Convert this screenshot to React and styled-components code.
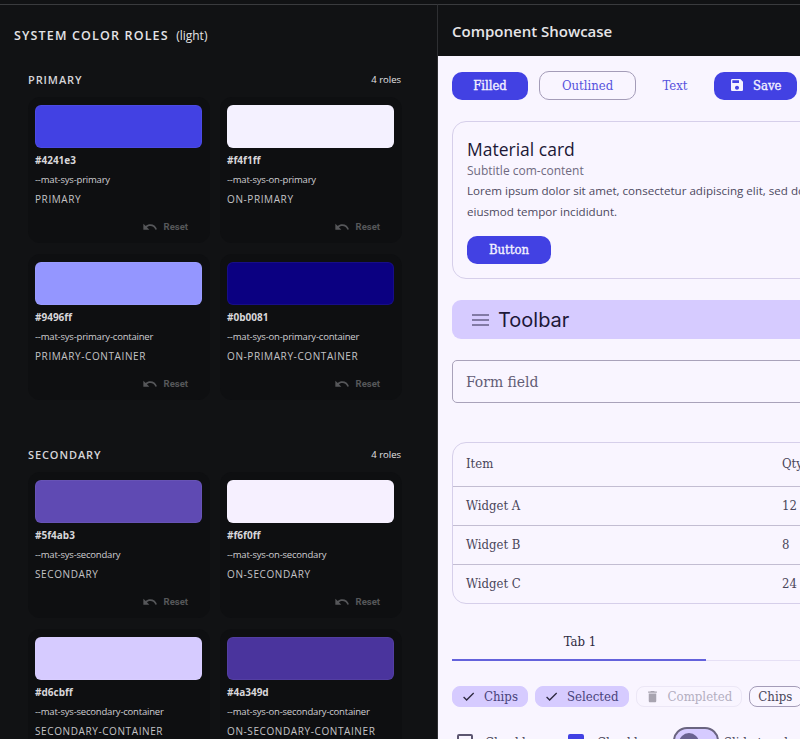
import React from 'react'
import styled, { createGlobalStyle } from 'styled-components'

const serif = `"DejaVu Serif Condensed", "DejaVu Serif", "Liberation Serif", serif`
const sans = `"Open Sans", "Noto Sans", sans-serif`

const GlobalStyle = createGlobalStyle`
	html, body {
		margin: 0;
		padding: 0;
		height: 100%;
		overflow: hidden;
		background: #111214;
	}
	* {
		box-sizing: border-box;
	}
`

const Page = styled.div`
	width: 800px;
	height: 739px;
	overflow: hidden;
	display: grid;
	grid-template-columns: 438px 362px;
	grid-template-rows: 1fr;
	background: #111214;
	padding-top: 4px;
	font-family: ${sans};
`

const Left = styled.div`
	border-top: 1px solid #3a3b3e;
	border-right: 1px solid #2e2f32;
	padding: 21px 14px 0;
	overflow: hidden;
	min-width: 0;
`

const Title = styled.h1`
	margin: 0 0 24px;
	font-size: 12.5px;
	line-height: 20px;
	font-weight: 600;
	letter-spacing: 1.15px;
	color: #e4e3e6;
	text-transform: uppercase;
	span {
		margin-left: 3px;
		letter-spacing: 0;
		font-size: 12px;
		text-transform: none;
		font-weight: 400;
	}
`

const Section = styled.section`
	padding: 0 22px 0 14px;
	margin-bottom: 45px;
`

const SectionHead = styled.div`
	display: flex;
	justify-content: space-between;
	align-items: center;
	height: 18px;
	margin-bottom: 9px;
	h2 {
		margin: 0;
		font-size: 11px;
		font-weight: 600;
		letter-spacing: 0.9px;
		color: #d6d5d8;
	}
	span {
		font-size: 9.5px;
		color: #e2e1e4;
	}
`

const CardGrid = styled.div`
	display: grid;
	grid-template-columns: 182px 182px;
	column-gap: 10px;
	row-gap: 11px;
`

const RoleCard = styled.div`
	height: 146px;
	padding: 8px 8px 0 7px;
	background: #0e0f11;
	border-radius: 12px;
	display: flex;
	flex-direction: column;
`

const Swatch = styled.div`
	height: 43px;
	flex: none;
	border-radius: 6px;
	background: ${p => p.$color};
	border: 1px solid rgba(255, 255, 255, 0.05);
`

const Hex = styled.div`
	margin-top: 5px;
	font-size: 10px;
	line-height: 14px;
	font-weight: 700;
	color: #d8d7da;
`

const VarName = styled.div`
	margin-top: 6px;
	font-size: 9.5px;
	line-height: 14px;
	font-weight: 500;
	letter-spacing: -0.2px;
	color: #cfced1;
	white-space: nowrap;
`

const RoleName = styled.div`
	margin-top: 5px;
	font-size: 10px;
	line-height: 14px;
	letter-spacing: 0.6px;
	color: #c4c3c6;
	white-space: nowrap;
`

const Reset = styled.div`
	margin-top: 13px;
	padding-right: 14px;
	display: flex;
	justify-content: flex-end;
	align-items: center;
	gap: 6px;
	font-family: Roboto, sans-serif;
	font-size: 9.5px;
	line-height: 14px;
	font-weight: 700;
	color: #56575a;
	svg {
		width: 16px;
		height: 16px;
		fill: #56575a;
	}
`

const Right = styled.div`
	display: flex;
	flex-direction: column;
	min-width: 0;
	overflow: hidden;
`

const RightHead = styled.div`
	flex: none;
	height: 52px;
	border-top: 1px solid #3a3b3e;
	padding: 0 14px;
	display: flex;
	align-items: center;
	background: #111214;
	font-size: 15px;
	font-weight: 600;
	color: #e6e5e8;
`

const Showcase = styled.div`
	flex: 1;
	padding: 15px 14px 0;
	background: #f9f5ff;
	width: 520px;
`

const ButtonRow = styled.div`
	display: flex;
	align-items: center;
	margin-bottom: 21px;
`

const FilledButton = styled.div`
	width: ${p => (p.$width ? `${p.$width}px` : 'auto')};
	height: 28px;
	padding: 0 ${p => p.$pad || 0}px 1px;
	margin-right: ${p => p.$gap || 0}px;
	display: inline-flex;
	align-items: center;
	justify-content: center;
	gap: 8px;
	border-radius: 10px;
	background: #4241e3;
	font-family: ${serif};
	font-size: 13px;
	font-weight: 400;
	-webkit-text-stroke: 0.35px #f4f1ff;
	color: #f4f1ff;
	svg {
		width: 16px;
		height: 16px;
		fill: #f4f1ff;
	}
`

const OutlinedButton = styled.div`
	width: 97px;
	height: 29px;
	margin-right: 14px;
	display: flex;
	align-items: center;
	justify-content: center;
	border: 1px solid #a49cb8;
	border-radius: 10px;
	font-family: ${serif};
	font-size: 13px;
	color: #5652dd;
`

const TextButton = styled.div`
	width: 50px;
	margin-right: 14px;
	text-align: center;
	font-family: ${serif};
	font-size: 13px;
	color: #5652dd;
`

const Card = styled.div`
	height: 158px;
	padding: 15px 14px 0;
	border: 1px solid #d6cfea;
	border-radius: 14px;
	margin-bottom: 21px;
	h3 {
		margin: 0;
		font-size: 17.5px;
		line-height: 24px;
		font-weight: 400;
		color: #1c1836;
	}
`

const Subtitle = styled.div`
	margin-top: 1px;
	font-size: 12px;
	line-height: 18px;
	color: #6f6a80;
`

const Lorem = styled.p`
	margin: 0 0 14px;
	font-size: 11.6px;
	line-height: 21px;
	color: #4d4960;
	width: 370px;
`

const Toolbar = styled.div`
	height: 39px;
	padding: 0 20px;
	display: flex;
	align-items: center;
	gap: 9px;
	border-radius: 9px;
	background: #d6cbff;
	margin-bottom: 21px;
	font-family: Inter, sans-serif;
	font-size: 20px;
	color: #1d1838;
	svg {
		width: 17px;
		height: 14px;
		stroke: #4a4468;
		stroke-width: 1.2;
	}
`

const FormField = styled.div`
	height: 43px;
	padding: 1px 13px 0;
	display: flex;
	align-items: center;
	border: 1px solid #a9a2ba;
	border-radius: 5px;
	margin-bottom: 39px;
	font-family: ${serif};
	font-size: 15.5px;
	color: #625c75;
`

const Table = styled.div`
	height: 162px;
	border: 1px solid #d6cfea;
	border-radius: 14px;
	margin-bottom: 21px;
	overflow: hidden;
`

const TableRow = styled.div`
	height: ${p => p.$height}px;
	padding-bottom: ${p => (p.$height > 39 || p.$last ? 3 : 1)}px;
	display: grid;
	grid-template-columns: 316px 1fr;
	align-items: center;
	border-bottom: ${p => (p.$last ? '0' : '1px solid #c3bdd2')};
	font-family: ${serif};
	font-size: 13px;
	color: #4a465a;
	div {
		padding-left: 13px;
	}
`

const Tabs = styled.div`
	display: flex;
	height: 36px;
	margin-bottom: 25px;
	border-bottom: 1px solid #e6e0f5;
`

const Tab = styled.div`
	flex: none;
	width: 254px;
	height: 36px;
	display: flex;
	align-items: center;
	justify-content: center;
	padding: 0 0 1px 2px;
	border-bottom: 2px solid ${p => (p.$active ? '#6462dc' : 'transparent')};
	font-family: ${serif};
	font-size: 13px;
	color: #2d2940;
`

const ChipRow = styled.div`
	display: flex;
	gap: 7px;
	margin-bottom: 26px;
`

const Chip = styled.div`
	height: 21px;
	padding: 0 ${p => (p.$plain ? 10 : 9)}px 0 8px;
	display: inline-flex;
	align-items: center;
	gap: 8px;
	border-radius: 8px;
	background: ${p => (p.$selected ? '#d6cbff' : 'transparent')};
	border: 1px solid ${p => (p.$selected ? '#d6cbff' : p.$disabled ? '#ece7f6' : '#a49cb8')};
	font-family: ${serif};
	font-size: 13.1px;
	color: ${p => (p.$selected ? '#48427a' : p.$disabled ? '#b3aebf' : '#4a465a')};
	svg {
		width: 15px;
		height: 15px;
		fill: ${p => (p.$disabled ? '#a8a4b0' : '#2d2940')};
	}
`

const ControlRow = styled.div`
	display: flex;
	align-items: flex-start;
	font-family: ${serif};
	font-size: 13px;
	line-height: 16px;
	color: #4a465a;
`

const Box = styled.div`
	width: 16px;
	height: 16px;
	margin: 1px ${p => p.$right}px 0 ${p => p.$left}px;
	flex: none;
	border-radius: 2px;
	border: 2px solid ${p => (p.$on ? '#4241e3' : '#5c5670')};
	background: ${p => (p.$on ? '#4241e3' : 'transparent')};
`

const CheckLabel = styled.div`
	width: ${p => p.$width}px;
	flex: none;
	margin-top: 2px;
`

const ToggleTrack = styled.div`
	width: 46px;
	height: 28px;
	margin: -6px 5px 0 5px;
	padding: 4px;
	flex: none;
	border: 2px solid #6a6480;
	border-radius: 14px;
	background: #d6cbff;
`

const ToggleKnob = styled.div`
	width: 20px;
	height: 20px;
	border-radius: 50%;
	background: #6a6290;
`

const mdi = {
	undo: 'M12.5 8c-2.65 0-5.05.99-6.9 2.6L2 7v9h9l-3.62-3.62c1.39-1.16 3.16-1.88 5.12-1.88 3.54 0 6.55 2.31 7.6 5.5l2.37-.78C21.08 11.03 17.15 8 12.5 8z',
	save: 'M17 3H5c-1.11 0-2 .9-2 2v14c0 1.1.89 2 2 2h14c1.1 0 2-.9 2-2V7l-4-4zm-5 16c-1.66 0-3-1.34-3-3s1.34-3 3-3 3 1.34 3 3-1.34 3-3 3zm3-10H5V5h10v4z',
	check: 'M9 16.17L4.83 12l-1.41 1.41L9 19 21 7l-1.41-1.41z',
	trash: 'M6 19c0 1.1.9 2 2 2h8c1.1 0 2-.9 2-2V7H6v12zM19 4h-3.5l-1-1h-5l-1 1H5v2h14V4z',
}

const Icon = ({ name }) => (
	<svg viewBox="0 0 24 24"><path d={mdi[name]} /></svg>
)

const primary = [
	{ hex: '#4241e3', token: 'primary' },
	{ hex: '#f4f1ff', token: 'on-primary' },
	{ hex: '#9496ff', token: 'primary-container' },
	{ hex: '#0b0081', token: 'on-primary-container' },
]

const secondary = [
	{ hex: '#5f4ab3', token: 'secondary' },
	{ hex: '#f6f0ff', token: 'on-secondary' },
	{ hex: '#d6cbff', token: 'secondary-container' },
	{ hex: '#4a349d', token: 'on-secondary-container' },
]

const rows = [
	{ item: 'Widget A', qty: 12, height: 39 },
	{ item: 'Widget B', qty: 8, height: 39 },
	{ item: 'Widget C', qty: 24, height: 39, last: true },
]

const RoleSection = ({ name, roles }) => (
	<Section>
		<SectionHead>
			<h2>{name}</h2>
			<span>4 roles</span>
		</SectionHead>
		<CardGrid>
			{roles.map(r => (
				<RoleCard key={r.token}>
					<Swatch $color={r.hex} />
					<Hex>{r.hex}</Hex>
					<VarName>--mat-sys-{r.token}</VarName>
					<RoleName>{r.token.toUpperCase()}</RoleName>
					<Reset><Icon name="undo" />Reset</Reset>
				</RoleCard>
			))}
		</CardGrid>
	</Section>
)

export default function App() {
	return (
		<Page>
			<GlobalStyle />
			<Left>
				<Title>System color roles <span>(light)</span></Title>
				<RoleSection name="PRIMARY" roles={primary} />
				<RoleSection name="SECONDARY" roles={secondary} />
			</Left>
			<Right>
				<RightHead>Component Showcase</RightHead>
				<Showcase>
					<ButtonRow>
						<FilledButton $gap={11} $width={76}>Filled</FilledButton>
						<OutlinedButton>Outlined</OutlinedButton>
						<TextButton>Text</TextButton>
						<FilledButton $pad={15}><Icon name="save" />Save</FilledButton>
					</ButtonRow>
					<Card>
						<h3>Material card</h3>
						<Subtitle>Subtitle com-content</Subtitle>
						<Lorem>Lorem ipsum dolor sit amet, consectetur adipiscing elit, sed do eiusmod tempor incididunt.</Lorem>
						<FilledButton $width={84}>Button</FilledButton>
					</Card>
					<Toolbar>
						<svg viewBox="0 0 17 14">
							<line x1="0" y1="2" x2="17" y2="2" />
							<line x1="0" y1="7" x2="17" y2="7" />
							<line x1="0" y1="12" x2="17" y2="12" />
						</svg>
						Toolbar
					</Toolbar>
					<FormField>Form field</FormField>
					<Table>
						<TableRow $height={44}><div>Item</div><div>Qty</div></TableRow>
						{rows.map(r => (
							<TableRow key={r.item} $height={r.height} $last={r.last}>
								<div>{r.item}</div>
								<div>{r.qty}</div>
							</TableRow>
						))}
					</Table>
					<Tabs>
						<Tab $active>Tab 1</Tab>
						<Tab>Tab 2</Tab>
					</Tabs>
					<ChipRow>
						<Chip $selected><Icon name="check" />Chips</Chip>
						<Chip $selected><Icon name="check" />Selected</Chip>
						<Chip $disabled><Icon name="trash" />Completed</Chip>
						<Chip $plain>Chips</Chip>
					</ChipRow>
					<ControlRow>
						<Box $left={5} $right={12} />
						<CheckLabel $width={83}>Checkbox</CheckLabel>
						<Box $left={0} $right={13} $on />
						<CheckLabel $width={71}>Checkbox</CheckLabel>
						<ToggleTrack><ToggleKnob /></ToggleTrack>
						<CheckLabel $width={100}>Slide toggle</CheckLabel>
					</ControlRow>
				</Showcase>
			</Right>
		</Page>
	)
}
